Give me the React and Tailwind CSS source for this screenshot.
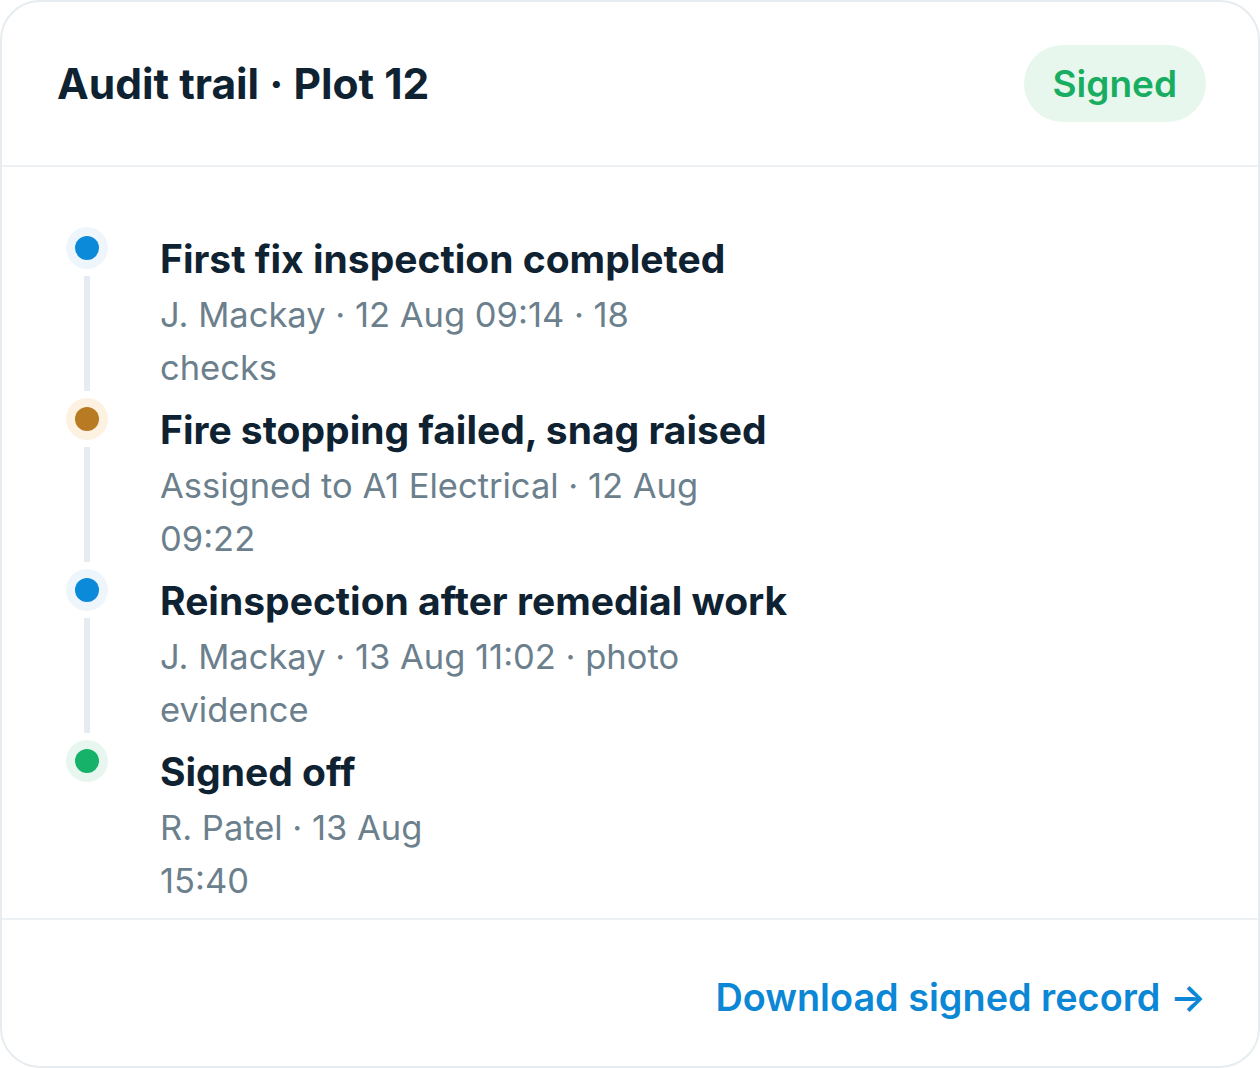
// App.jsx
const events = [
    {
        title: 'First fix inspection completed',
        meta: 'J. Mackay · 12 Aug 09:14 · 18 checks',
        dot: 'bg-[#0a8ad8]',
        halo: 'bg-[#eef6fc]',
        metaWidth: 'max-w-[560px]',
    },
    {
        title: 'Fire stopping failed, snag raised',
        meta: 'Assigned to A1 Electrical · 12 Aug 09:22',
        dot: 'bg-[#b87a22]',
        halo: 'bg-[#fdf2e2]',
        metaWidth: 'max-w-[560px]',
    },
    {
        title: 'Reinspection after remedial work',
        meta: 'J. Mackay · 13 Aug 11:02 · photo evidence',
        dot: 'bg-[#0a8ad8]',
        halo: 'bg-[#eef6fc]',
        metaWidth: 'max-w-[560px]',
    },
    {
        title: 'Signed off',
        meta: 'R. Patel · 13 Aug 15:40',
        dot: 'bg-[#17b26a]',
        halo: 'bg-[#e7f6ee]',
        metaWidth: 'max-w-[300px]',
    },
];

export default function App() {
    return (
        <div className="bg-white min-h-screen font-['Inter',sans-serif]">
            <div className="w-[1260px] h-[1068px] flex flex-col border-2 border-[#e6ecf0] rounded-[40px] overflow-hidden bg-white">
                {/* Header */}
                <header className="flex items-center justify-between pl-[55px] pr-[52px] h-[165px] border-b-2 border-[#edf1f4] shrink-0">
                    <h1 className="text-[42.5px] font-bold text-[#0f2231]">Audit trail · Plot 12</h1>
                    <span className="bg-[#e7f7ee] text-[#19ad62] text-[37px] font-semibold rounded-full px-[29px] h-[77px] flex items-center">
                        Signed
                    </span>
                </header>

                {/* Timeline */}
                <ol className="flex-1 pt-[60px] pl-[64px]">
                    {events.map((event, i) => (
                        <li key={event.title} className="flex gap-[52px]">
                            <div className="w-[42px] flex flex-col items-center shrink-0">
                                <div className={`w-[42px] h-[42px] rounded-full flex items-center justify-center ${event.halo}`}>
                                    <div className={`w-[24px] h-[24px] rounded-full ${event.dot}`} />
                                </div>
                                {i < events.length - 1 && <div className="w-[6px] flex-1 bg-[#e5ebf0] mt-[7px] mb-[7px]" />}
                            </div>
                            <div className="pt-[8px] pb-[4px]">
                                <h2 className="text-[39px] leading-[48px] font-bold text-[#0f2231]">{event.title}</h2>
                                <p className={`mt-[5px] text-[34.5px] leading-[53px] text-[#6b7f8d] ${event.metaWidth}`}>{event.meta}</p>
                            </div>
                        </li>
                    ))}
                </ol>

                {/* Footer */}
                <footer className="h-[148px] border-t-2 border-[#edf1f4] flex items-center justify-end pt-[8px] pr-[52px] shrink-0">
                    <a href="#" className="text-[37.8px] font-semibold text-[#0b87d6]">
                        Download signed record →
                    </a>
                </footer>
            </div>
        </div>
    );
}
